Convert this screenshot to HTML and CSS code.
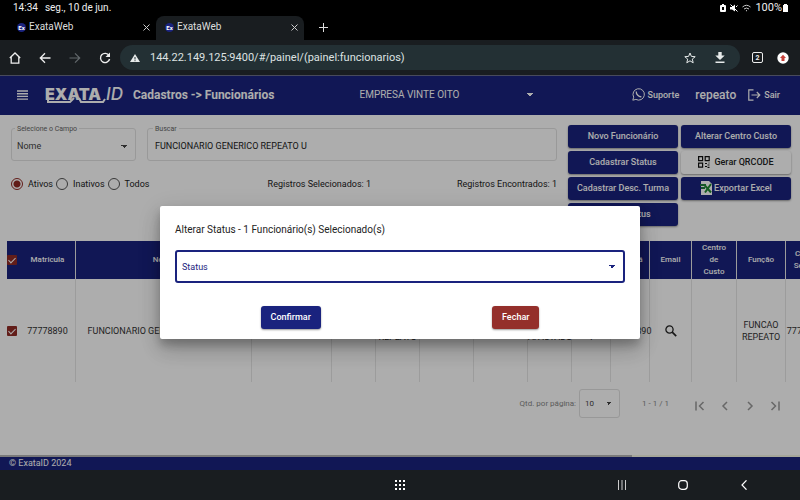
FILE: index.html
```html
<!DOCTYPE html>
<html lang="pt-BR">
<head>
<meta charset="utf-8">
<meta name="viewport" content="width=device-width, initial-scale=1">
<title>ExataWeb</title>
<link rel="stylesheet" href="styles.css">
</head>
<body>
<div class="status-bar">
  <span>14:34</span><span class="date">seg., 10 de jun.</span>
  <span class="status-icons">
    <svg width="6" height="8" viewBox="0 0 6 8"><path fill="#fff" fill-rule="evenodd" d="M1 1h1V0h2v1h1q1 0 1 1v5q0 1-1 1H1Q0 8 0 7V2q0-1 1-1zm1 2v3h2V3z"/></svg>
    <svg width="8" height="8" viewBox="0 0 8 8"><path fill="#fff" d="M0 3h2l3-2.500v7L2 5.500H0z"/><path stroke="#fff" d="M.5.5l7 7M6 3l1.500-1.500"/></svg>
    <svg width="9" height="8" viewBox="0 0 9 8" fill="none" stroke="#ccc"><path d="M.5 3q4-3.500 8 0M2 5q2.500-2 5 0"/><circle cx="4.500" cy="6.700" r=".6" fill="#ccc" stroke="none"/></svg>
    <span>100%</span>
    <svg class="battery" width="5" height="8" viewBox="0 0 5 8"><path fill="#fff" d="M0 1h1V0h3v1h1v7H0z"/></svg>
  </span>
</div>

<nav class="tabs" aria-label="Abas">
  <div class="tab">
    <span class="favicon">Ex</span><span class="tab-title">ExataWeb</span>
    <button class="icon-btn" aria-label="Fechar aba"><svg width="7" height="7" viewBox="0 0 7 7"><path stroke="#ccc" d="M.5.5l6 6M6.500.5l-6 6"/></svg></button>
  </div>
  <div class="tab active">
    <span class="favicon">Ex</span><span class="tab-title">ExataWeb</span>
    <button class="icon-btn" aria-label="Fechar aba"><svg width="7" height="7" viewBox="0 0 7 7"><path stroke="#ccc" d="M.5.5l6 6M6.500.5l-6 6"/></svg></button>
  </div>
  <button class="icon-btn new-tab" aria-label="Nova aba"><svg width="9" height="9" viewBox="0 0 9 9"><path stroke="#ddd" d="M4.500 0v9M0 4.500h9"/></svg></button>
</nav>

<div class="toolbar">
  <button class="icon-btn" aria-label="Início"><svg width="12" height="12" viewBox="0 0 12 12" fill="none" stroke="#eee" stroke-width="1.300"><path d="M.8 6L6 1l5.200 5M2.200 5v6.200h7.600V5"/></svg></button>
  <button class="icon-btn" aria-label="Voltar"><svg width="12" height="12" viewBox="0 0 12 12" fill="none" stroke="#eee" stroke-width="1.300"><path d="M11.500 6H1.500M6 1.300L1.300 6 6 10.700"/></svg></button>
  <button class="icon-btn" aria-label="Avançar"><svg width="12" height="12" viewBox="0 0 12 12" fill="none" stroke="#62686b" stroke-width="1.200"><path d="M.5 6h10M6 1.300L10.700 6 6 10.700"/></svg></button>
  <button class="icon-btn" aria-label="Recarregar"><svg width="12" height="12" viewBox="0 0 12 12" fill="none" stroke="#eee" stroke-width="1.400"><path d="M10 3.500A4.600 4.600 0 1 0 10.600 7"/><path fill="#eee" stroke="none" d="M11 .5v4.500H6.500z"/></svg></button>
  <div class="address">
    <svg width="10" height="8" viewBox="0 0 10 8"><path fill="#e6eaea" d="M5 0l5 8H0z"/><path stroke="#233034" d="M5 3v2.500M5 6.200v1"/></svg>
    <input type="text" aria-label="Endereço" value="144.22.149.125:9400/#/painel/(painel:funcionarios)">
    <button class="icon-btn" aria-label="Favoritar"><svg width="12" height="12" viewBox="0 0 12 12" fill="none" stroke="#e6eaea"><path d="M6 1l1.400 3.400 3.800.3-2.900 2.400.9 3.700L6 8.800l-3.200 2 .9-3.700L.8 4.700l3.800-.3z"/></svg></button>
    <button class="icon-btn" aria-label="Baixar"><svg width="10" height="11" viewBox="0 0 10 11"><path fill="#e6eaea" d="M3.300 0h3.400v3.500h3L5 8 .3 3.500h3zM.5 9.500h9V11h-9z"/></svg></button>
  </div>
  <div class="toolbar-end">
    <button class="icon-btn tab-count" aria-label="Abas abertas">2</button>
    <button class="icon-btn" aria-label="Atualizar navegador"><svg width="12" height="12" viewBox="0 0 12 12"><circle cx="6" cy="6" r="5.700" fill="#fff"/><path fill="#c6413a" d="M6 2.800l3 3.200H7.500v3h-3V6H3z"/></svg></button>
  </div>
</div>

<div class="app">
  <header class="app-header">
    <button class="icon-btn" aria-label="Menu"><svg width="11" height="10" viewBox="0 0 11 10"><path stroke="#fff" stroke-width="1.400" d="M0 1h11M0 3.700h11M0 6.400h11M0 9.100h11"/></svg></button>
    <svg class="logo" width="80" height="22" viewBox="0 0 80 22" role="img" aria-label="ExataID">
      <text class="logo-main" x="0" y="16">EXATA</text>
      <text class="logo-id" x="61" y="16">ID</text>
      <path fill="none" stroke="#fff" stroke-width="2" d="M3 15v3h22l4-4M34 14l2 4h22l2-3"/>
    </svg>
    <h1>Cadastros -&gt; Funcionários</h1>
    <select class="company" aria-label="Empresa"><option>EMPRESA VINTE OITO</option></select>
    <nav class="user-nav">
      <a href="#suporte"><svg width="13" height="13" viewBox="0 0 13 13" fill="none" stroke="#fff"><path d="M.8 12.200l.9-3A5.700 5.700 0 1 1 3.900 11.400z"/><path stroke-width="1.300" d="M4.300 3.500Q4 5.500 5.800 7.300T9.400 8.700"/></svg>Suporte</a>
      <span class="user">repeato</span>
      <a href="#sair"><svg width="13" height="12" viewBox="0 0 13 12" fill="none" stroke="#fff" stroke-width="1.200"><path d="M5.500.8H.8v10.400h4.700M3.500 6h8M8.800 3l3 3-3 3"/></svg>Sair</a>
    </nav>
  </header>

  <main>
    <section class="controls">
      <div class="filters">
        <div class="fields">
          <div class="field field-by"><label for="campo">Selecione o Campo</label><select id="campo"><option>Nome</option></select></div>
          <div class="field field-search"><label for="buscar">Buscar</label><input id="buscar" type="text" value="FUNCIONARIO GENERICO REPEATO U"></div>
        </div>
        <div class="summary">
          <div class="radios">
            <label><input type="radio" name="situacao" checked>Ativos</label>
            <label><input type="radio" name="situacao">Inativos</label>
            <label><input type="radio" name="situacao">Todos</label>
          </div>
          <span>Registros Selecionados: 1</span>
          <span>Registros Encontrados: 1</span>
        </div>
      </div>
      <div class="actions">
        <button class="btn">Novo Funcionário</button>
        <button class="btn">Alterar Centro Custo</button>
        <button class="btn">Cadastrar Status</button>
        <button class="btn light"><svg width="12" height="12" viewBox="0 0 12 12" fill="none" stroke="#111" stroke-width="1.200"><path d="M.6.6h4v4h-4zM7.200.6h4v4h-4zM.6 7.200h4v4h-4z"/><path d="M7 7.500h2M9.500 9h2M7 10.500h2M10.500 7h1M9.500 11.400h2"/></svg>Gerar QRCODE</button>
        <button class="btn">Cadastrar Desc. Turma</button>
        <button class="btn excel"><svg width="13" height="14" viewBox="0 0 13 14"><path fill="#fff" d="M1 0h8l3 3v11H1z"/><path fill="#1f7a3d" d="M0 3h6v2H0zM1 6h4v2H1z"/><path stroke="#1f8a32" stroke-width="2" d="M4 3.500l7 8M11 3l-6 8.500"/></svg>Exportar Excel</button>
        <button class="btn">Alterar Status</button>
      </div>
    </section>

    <div class="table-wrap">
      <table>
        <thead><tr>
          <th><input type="checkbox" checked aria-label="Selecionar todos"></th><th>Matricula</th><th>Nome</th><th>CPF</th><th>PIS</th><th>Cargo</th><th>Horário</th><th>Turma</th><th>Status</th><th>Dig.</th><th>Crachá</th><th>Email</th><th>Centro de Custo</th><th>Função</th><th>Centro Servico</th>
        </tr></thead>
        <tbody><tr>
          <td><input type="checkbox" checked aria-label="Selecionar 77778890"></td><td>77778890</td><td>FUNCIONARIO GENERICO REPEATO U</td><td></td><td></td><td>CARGO REPEATO</td><td></td><td>TURMA 21</td><td>NÃO AFASTADO</td><td>0<br>1</td><td>77778890</td>
          <td><button class="icon-btn" aria-label="Enviar email"><svg width="12" height="12" viewBox="0 0 12 12" fill="none" stroke="#222" stroke-width="1.300"><circle cx="4.500" cy="4.500" r="3.600"/><path stroke-width="1.700" d="M7.200 7.200l4 4"/></svg></button></td>
          <td></td><td>FUNCAO REPEATO</td><td>77778890</td>
        </tr></tbody>
      </table>
    </div>

    <div class="paginator">
      <label for="qtd">Qtd. por página:</label>
      <select id="qtd"><option>10</option></select>
      <span class="range">1 - 1 / 1</span>
      <div class="pages">
        <button class="icon-btn" aria-label="Primeira página"><svg width="10" height="10" viewBox="0 0 10 10"><path d="M1 .5v9M8.500 1l-4 4 4 4"/></svg></button>
        <button class="icon-btn" aria-label="Anterior"><svg width="10" height="10" viewBox="0 0 10 10"><path d="M7 1L3 5l4 4"/></svg></button>
        <button class="icon-btn" aria-label="Próxima"><svg width="10" height="10" viewBox="0 0 10 10"><path d="M3 1l4 4-4 4"/></svg></button>
        <button class="icon-btn" aria-label="Última página"><svg width="10" height="10" viewBox="0 0 10 10"><path d="M9 .5v9M1.500 1l4 4-4 4"/></svg></button>
      </div>
    </div>
    <div class="scroll-track"><div class="scroll-thumb"></div></div>
  </main>

  <footer>© ExataID 2024</footer>

  <div class="backdrop">
    <form class="dialog" role="dialog" aria-labelledby="dialog-title">
      <h2 id="dialog-title">Alterar Status - 1 Funcionário(s) Selecionado(s)</h2>
      <div class="status-field"><label for="status">Status</label><select id="status"><option></option></select></div>
      <div class="dialog-actions">
        <button type="button" class="btn">Confirmar</button>
        <button type="button" class="btn danger">Fechar</button>
      </div>
    </form>
  </div>
</div>

<nav class="system-nav" aria-label="Sistema">
  <button class="icon-btn apps" aria-label="Aplicativos"><svg width="11" height="11" viewBox="0 0 11 11" fill="#fff"><path d="M0 0h2v2H0zM4 0h2v2H4zM8 0h2v2H8zM0 4h2v2H0zM4 4h2v2H4zM8 4h2v2H8zM0 8h2v2H0zM4 8h2v2H4zM8 8h2v2H8z"/></svg></button>
  <div class="system-keys">
    <button class="icon-btn" aria-label="Recentes"><svg width="10" height="10" viewBox="0 0 10 10"><path stroke="#ccc" d="M1.500 0v10M5 0v10M8.500 0v10"/></svg></button>
    <button class="icon-btn" aria-label="Início"><svg width="10" height="10" viewBox="0 0 10 10"><rect x=".7" y=".7" width="8.600" height="8.600" rx="3" fill="none" stroke="#fff" stroke-width="1.200"/></svg></button>
    <button class="icon-btn" aria-label="Voltar"><svg width="10" height="10" viewBox="0 0 10 10"><path fill="none" stroke="#fff" stroke-width="1.200" d="M7.500.3L3 5l4.500 4.700"/></svg></button>
  </div>
</nav>
</body>
</html>
```
FILE: styles.css
```css
* { box-sizing: border-box; }

body {
  margin: 0;
  min-height: 100vh;
  display: flex;
  flex-direction: column;
  background: #000;
  font: 9px/12px Roboto, sans-serif;
  color: #222;
}

button, input, select { font: inherit; color: inherit; margin: 0; }
svg { display: block; flex: none; }

.icon-btn {
  display: flex;
  align-items: center;
  justify-content: center;
  padding: 0;
  border: 0;
  background: none;
}

select {
  appearance: none;
  border: 0;
  padding: 0;
  background: none;
}

input[type="text"] {
  border: 0;
  padding: 0;
  min-width: 0;
  background: none;
}

/* Device status bar */
.status-bar {
  display: flex;
  align-items: center;
  height: 16px;
  padding: 0 12px 0 13px;
  color: #eee;
  font-size: 10px;
}
.date { margin-left: 7px; }
.status-icons { display: flex; align-items: center; gap: 4px; margin-left: auto; font-size: 11px; }
.battery { margin-left: -3px; }

/* Browser tabs */
.tabs { display: flex; height: 24px; padding-left: 8px; color: #ddd; font-size: 10px; }
.tab { display: flex; align-items: center; width: 148px; padding: 0 6px 2px 9px; }
.tab.active { background: #191d20; border-radius: 8px 8px 0 0; }
.favicon {
  width: 9px;
  height: 9px;
  margin-right: 3px;
  border-radius: 5px;
  background: #1a237e;
  color: #fff;
  font-size: 6px;
  font-weight: 700;
  line-height: 9px;
  text-align: center;
}
.tab .icon-btn { margin-left: auto; }
.new-tab { margin: 0 15px; padding-bottom: 2px; }

.toolbar {
  display: flex;
  align-items: center;
  gap: 18px;
  height: 35px;
  padding: 0 11px 0 9px;
  background: #191d20;
}
.toolbar-end { display: flex; align-items: center; gap: 14px; }
.address {
  flex: 1;
  display: flex;
  align-items: center;
  gap: 19px;
  height: 25px;
  margin: 0 -6px 0 -9px;
  padding: 0 15px 0 10px;
  border-radius: 13px;
  background: #233034;
  color: #dde2e2;
  font-size: 11px;
}
.address input { flex: 1; margin-left: -9px; }
.tab-count {
  width: 11px;
  height: 11px;
  border: 1px solid #eee;
  border-radius: 2px;
  color: #eee;
  font-size: 7px;
  font-weight: 700;
}

/* Application */
.app {
  position: relative;
  flex: 1;
  display: flex;
  flex-direction: column;
  background: #fff;
}
.app-header {
  display: flex;
  align-items: center;
  height: 40px;
  padding: 0 20px 2px 17px;
  border-top: 1px solid #6b6e86;
  background: #1a237e;
  color: #fff;
}
.logo { margin: 0 8px 0 17px; }
.logo text { fill: #fff; font-family: Inter, sans-serif; font-size: 16px; }
.logo .logo-main { font-weight: 900; }
.logo .logo-id { font-style: italic; font-weight: 500; font-size: 17px; }
h1 { margin: 0; font-size: 12px; font-weight: 700; line-height: 16px; }
.company {
  width: 174px;
  margin-left: 85px;
  font-size: 10px;
}
.company, .field select, .paginator select, .status-field select {
  background-image: conic-gradient(from 315deg at 50% 100%, currentColor 90deg, transparent 0);
  background-image: conic-gradient(from 315deg at 50% 100%, transparent 0, transparent 90deg, transparent 0), linear-gradient(to bottom left, currentColor 50%, transparent 50%), linear-gradient(to bottom right, currentColor 50%, transparent 50%);
  background-repeat: no-repeat;
  background-size: 0 0, 3px 3px, 3px 3px;
  background-position: 0 0, right 3px center, right center;
}
.company, .field select, .paginator select, .status-field select {
  background-image: linear-gradient(to bottom left, currentColor 50%, transparent 50%), linear-gradient(to bottom right, currentColor 50%, transparent 50%);
  background-size: 3px 3px;
  background-position: right 3px center, right center;
}
.user-nav { display: flex; align-items: center; gap: 12px; margin-left: auto; font-weight: 500; }
.user-nav a { display: flex; align-items: center; gap: 3px; color: inherit; text-decoration: none; }
.user { margin-left: 4px; font-size: 12px; }

main { flex: 1; display: flex; flex-direction: column; }

.controls { display: flex; gap: 11px; padding: 10px 9px 0 11px; }
.filters { flex: 1; }
.fields { display: flex; gap: 11px; padding-top: 3px; }
.field {
  position: relative;
  display: flex;
  align-items: center;
  height: 33px;
  padding: 3px 8px 0 5px;
  border: 1px solid #e2e2e2;
  border-radius: 3px;
}
.field label {
  position: absolute;
  top: -6px;
  left: 3px;
  padding: 0 2px;
  background: #fff;
  color: #666;
  font-size: 7px;
}
.field-by { width: 125px; }
.field-by select { color: #444; }
.field-search { flex: 1; padding-left: 7px; }
.field-search label { left: 5px; }
.field select, .field input { flex: 1; }

.summary {
  display: grid;
  grid-template-columns: 47% 1fr auto;
  align-items: center;
  margin-top: 17px;
}
.radios { display: flex; gap: 3px; }
.radios label { display: flex; align-items: center; gap: 5px; }
.radios input {
  appearance: none;
  width: 12px;
  height: 12px;
  border: 1px solid #555;
  border-radius: 6px;
}
.radios input:checked { border-color: #912b25; background: radial-gradient(circle, #912b25 3px, transparent 4px); }

.actions { display: grid; grid-template-columns: 110px 110px; grid-auto-rows: 23px; gap: 3px; }
.btn {
  display: flex;
  align-items: center;
  justify-content: center;
  gap: 4px;
  height: 23px;
  padding: 0 10px 1px;
  border: 0;
  border-radius: 3px;
  background: #1a237e;
  box-shadow: 0 1px 2px rgba(0, 0, 0, .4);
  color: #fff;
  font-weight: 500;
  white-space: nowrap;
}
.btn.light { background: #fff; color: #222; }
.btn.excel { gap: 1px; }
.btn.danger { background: #942f2b; }

.table-wrap { margin: 15px 0 0 7px; overflow: hidden; }
table { width: 822px; border-collapse: separate; border-spacing: 0; table-layout: fixed; text-align: center; }
th, td { padding: 0; border-right: 1px solid #e6e6e6; }
th { height: 38px; background: #1a237e; color: #fff; font-size: 8px; font-weight: 500; }
th:first-child { border-right: 0; }
td { height: 103px; color: #333; }
th:nth-child(1) { width: 13px; }
th:nth-child(2) { width: 56px; }
th:nth-child(3) { width: 176px; }
th:nth-child(4) { width: 80px; }
th:nth-child(5), th:nth-child(6) { width: 44px; }
th:nth-child(7), th:nth-child(8) { width: 54px; }
th:nth-child(9) { width: 44px; }
th:nth-child(10), th:nth-child(11) { width: 39px; }
th:nth-child(12) { width: 42px; }
th:nth-child(13) { width: 45px; padding: 0 8px; }
th:nth-child(14) { width: 49px; }
td:nth-child(1) { border-right: 0; }
table input {
  appearance: none;
  display: block;
  width: 10px;
  height: 10px;
  border-radius: 1px;
  background: #912b25;
}
table input::before {
  content: "";
  display: block;
  width: 3px;
  height: 6px;
  margin: 1px 0 0 3px;
  border: solid #fff;
  border-width: 0 1px 1px 0;
  transform: rotate(45deg);
}
td .icon-btn { margin: auto; }

.paginator {
  display: flex;
  align-items: center;
  justify-content: flex-end;
  margin-top: 7px;
  padding-right: 20px;
  color: #888;
  font-size: 8px;
}
.paginator select {
  width: 41px;
  height: 29px;
  margin: 0 22px 0 3px;
  padding-left: 5px;
  border: 1px solid #e0e0e0;
  border-radius: 3px;
  background-position: right 10px center, right 7px center;
  color: #444;
}
.pages { display: flex; gap: 15px; margin: 4px 0 0 26px; }
.pages svg { fill: none; stroke: #999; stroke-width: 1.5px; }

.scroll-track { margin-top: auto; background: #f3f5e4; }
.scroll-thumb { width: 79%; height: 2px; background: #b4b4b4; }

footer { padding-left: 9px; background: #1a237e; color: #fff; line-height: 13px; }

/* Modal */
.backdrop {
  position: absolute;
  inset: 0;
  display: flex;
  align-items: center;
  justify-content: center;
  background: rgba(0, 0, 0, .32);
}
.dialog {
  width: 60%;
  padding: 16px 15px 10px;
  border-radius: 2px;
  background: #fff;
  box-shadow: 0 6px 8px rgba(0, 0, 0, .2), 0 12px 20px rgba(0, 0, 0, .14), 0 5px 24px rgba(0, 0, 0, .12);
}
h2 { margin: 0 0 12px; font-size: 10px; font-weight: 400; line-height: 16px; }
.status-field {
  display: flex;
  align-items: center;
  height: 33px;
  padding: 0 8px 0 5px;
  border: 2px solid #1a237e;
  border-radius: 3px;
  color: #1a237e;
}
.status-field select { flex: 1; }
.dialog-actions { display: flex; justify-content: space-around; margin-top: 23px; }

/* Device navigation */
.system-nav {
  display: grid;
  grid-template-columns: 1fr auto 1fr;
  align-items: center;
  height: 30px;
  background: #191d20;
}
.apps { grid-column: 2; }
.system-keys { display: flex; justify-content: space-between; width: 132px; margin-left: auto; margin-right: 51px; }
```
